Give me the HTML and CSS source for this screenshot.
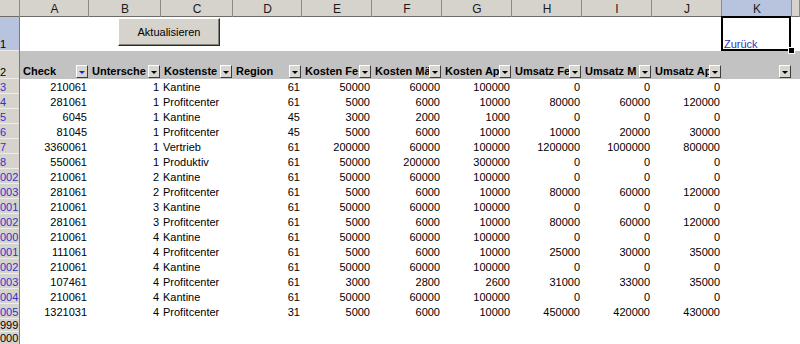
FILE: index.html
```html
<!DOCTYPE html>
<html lang="de">

<head>
    <meta charset="UTF-8">
    <title>Kostenübersicht</title>
    <link rel="stylesheet" href="styles.css">
</head>

<body>

    <div class="sheet">
        <table class="grid">
            <colgroup>
                <col class="w-rh">
                <col class="w69">
                <col class="w72">
                <col class="w72">
                <col class="w69">
                <col class="w70">
                <col class="w70">
                <col class="w70">
                <col class="w70">
                <col class="w70">
                <col class="w70">
                <col class="w70">
                <col class="w-rest">
            </colgroup>

            <!-- Column letters -->
            <thead>
                <tr class="col-head">
                    <th class="corner"></th>
                    <th>A</th>
                    <th>B</th>
                    <th>C</th>
                    <th>D</th>
                    <th>E</th>
                    <th>F</th>
                    <th>G</th>
                    <th>H</th>
                    <th>I</th>
                    <th>J</th>
                    <th class="active">K</th>
                    <th></th>
                </tr>
            </thead>

            <tbody>
                <tr class="row-top">
                    <th class="rh active">1</th>
                    <td></td><td></td><td></td><td></td><td></td><td></td>
                    <td></td><td></td><td></td><td></td>
                    <td class="selected"><a href="#">Zurück</a></td>
                    <td></td>
                </tr>

                <!-- Autofilter header -->
                <tr class="row-filter">
                    <th class="rh">2</th>
                    <td>Check<i class="dd on"></i></td>
                    <td>Untersche<i class="dd"></i></td>
                    <td>Kostenste<i class="dd"></i></td>
                    <td>Region<i class="dd"></i></td>
                    <td>Kosten Fe<i class="dd"></i></td>
                    <td>Kosten Mä<i class="dd"></i></td>
                    <td>Kosten Ap<i class="dd"></i></td>
                    <td>Umsatz Fe<i class="dd"></i></td>
                    <td>Umsatz M<i class="dd"></i></td>
                    <td>Umsatz Ap<i class="dd"></i></td>
                    <td><i class="dd"></i></td>
                    <td></td>
                </tr>

                <tr>
                    <th class="rh filtered">3</th>
                    <td class="n">210061</td><td class="n">1</td><td>Kantine</td><td class="n">61</td>
                    <td class="n">50000</td><td class="n">60000</td><td class="n">100000</td>
                    <td class="n">0</td><td class="n">0</td><td class="n">0</td><td></td><td></td>
                </tr>
                <tr>
                    <th class="rh filtered">4</th>
                    <td class="n">281061</td><td class="n">1</td><td>Profitcenter</td><td class="n">61</td>
                    <td class="n">5000</td><td class="n">6000</td><td class="n">10000</td>
                    <td class="n">80000</td><td class="n">60000</td><td class="n">120000</td><td></td><td></td>
                </tr>
                <tr>
                    <th class="rh filtered">5</th>
                    <td class="n">6045</td><td class="n">1</td><td>Kantine</td><td class="n">45</td>
                    <td class="n">3000</td><td class="n">2000</td><td class="n">1000</td>
                    <td class="n">0</td><td class="n">0</td><td class="n">0</td><td></td><td></td>
                </tr>
                <tr>
                    <th class="rh filtered">6</th>
                    <td class="n">81045</td><td class="n">1</td><td>Profitcenter</td><td class="n">45</td>
                    <td class="n">5000</td><td class="n">6000</td><td class="n">10000</td>
                    <td class="n">10000</td><td class="n">20000</td><td class="n">30000</td><td></td><td></td>
                </tr>
                <tr>
                    <th class="rh filtered">7</th>
                    <td class="n">3360061</td><td class="n">1</td><td>Vertrieb</td><td class="n">61</td>
                    <td class="n">200000</td><td class="n">60000</td><td class="n">100000</td>
                    <td class="n">1200000</td><td class="n">1000000</td><td class="n">800000</td><td></td><td></td>
                </tr>
                <tr>
                    <th class="rh filtered">8</th>
                    <td class="n">550061</td><td class="n">1</td><td>Produktiv</td><td class="n">61</td>
                    <td class="n">50000</td><td class="n">200000</td><td class="n">300000</td>
                    <td class="n">0</td><td class="n">0</td><td class="n">0</td><td></td><td></td>
                </tr>
                <tr>
                    <th class="rh filtered">002</th>
                    <td class="n">210061</td><td class="n">2</td><td>Kantine</td><td class="n">61</td>
                    <td class="n">50000</td><td class="n">60000</td><td class="n">100000</td>
                    <td class="n">0</td><td class="n">0</td><td class="n">0</td><td></td><td></td>
                </tr>
                <tr>
                    <th class="rh filtered">003</th>
                    <td class="n">281061</td><td class="n">2</td><td>Profitcenter</td><td class="n">61</td>
                    <td class="n">5000</td><td class="n">6000</td><td class="n">10000</td>
                    <td class="n">80000</td><td class="n">60000</td><td class="n">120000</td><td></td><td></td>
                </tr>
                <tr>
                    <th class="rh filtered">001</th>
                    <td class="n">210061</td><td class="n">3</td><td>Kantine</td><td class="n">61</td>
                    <td class="n">50000</td><td class="n">60000</td><td class="n">100000</td>
                    <td class="n">0</td><td class="n">0</td><td class="n">0</td><td></td><td></td>
                </tr>
                <tr>
                    <th class="rh filtered">002</th>
                    <td class="n">281061</td><td class="n">3</td><td>Profitcenter</td><td class="n">61</td>
                    <td class="n">5000</td><td class="n">6000</td><td class="n">10000</td>
                    <td class="n">80000</td><td class="n">60000</td><td class="n">120000</td><td></td><td></td>
                </tr>
                <tr>
                    <th class="rh filtered">000</th>
                    <td class="n">210061</td><td class="n">4</td><td>Kantine</td><td class="n">61</td>
                    <td class="n">50000</td><td class="n">60000</td><td class="n">100000</td>
                    <td class="n">0</td><td class="n">0</td><td class="n">0</td><td></td><td></td>
                </tr>
                <tr>
                    <th class="rh filtered">001</th>
                    <td class="n">111061</td><td class="n">4</td><td>Profitcenter</td><td class="n">61</td>
                    <td class="n">5000</td><td class="n">6000</td><td class="n">10000</td>
                    <td class="n">25000</td><td class="n">30000</td><td class="n">35000</td><td></td><td></td>
                </tr>
                <tr>
                    <th class="rh filtered">002</th>
                    <td class="n">210061</td><td class="n">4</td><td>Kantine</td><td class="n">61</td>
                    <td class="n">50000</td><td class="n">60000</td><td class="n">100000</td>
                    <td class="n">0</td><td class="n">0</td><td class="n">0</td><td></td><td></td>
                </tr>
                <tr>
                    <th class="rh filtered">003</th>
                    <td class="n">107461</td><td class="n">4</td><td>Profitcenter</td><td class="n">61</td>
                    <td class="n">3000</td><td class="n">2800</td><td class="n">2600</td>
                    <td class="n">31000</td><td class="n">33000</td><td class="n">35000</td><td></td><td></td>
                </tr>
                <tr>
                    <th class="rh filtered">004</th>
                    <td class="n">210061</td><td class="n">4</td><td>Kantine</td><td class="n">61</td>
                    <td class="n">50000</td><td class="n">60000</td><td class="n">100000</td>
                    <td class="n">0</td><td class="n">0</td><td class="n">0</td><td></td><td></td>
                </tr>
                <tr>
                    <th class="rh filtered">005</th>
                    <td class="n">1321031</td><td class="n">4</td><td>Profitcenter</td><td class="n">31</td>
                    <td class="n">5000</td><td class="n">6000</td><td class="n">10000</td>
                    <td class="n">450000</td><td class="n">420000</td><td class="n">430000</td><td></td><td></td>
                </tr>

                <tr class="row-empty">
                    <th class="rh">999</th>
                    <td></td><td></td><td></td><td></td><td></td><td></td>
                    <td></td><td></td><td></td><td></td><td></td><td></td>
                </tr>
                <tr class="row-empty">
                    <th class="rh">000</th>
                    <td></td><td></td><td></td><td></td><td></td><td></td>
                    <td></td><td></td><td></td><td></td><td></td><td></td>
                </tr>
            </tbody>
        </table>

        <!-- Floating sheet button -->
        <button class="btn-refresh" type="button">Aktualisieren</button>
    </div>

</body>

</html>
```

FILE: styles.css
```css
* {
    box-sizing: border-box;
}

html,
body {
    margin: 0;
    padding: 0;
    overflow: hidden;
    background-color: #ffffff;
}

body {
    font-family: 'Liberation Sans', Arial, sans-serif;
    font-size: 11px;
    color: #000000;
}

.sheet {
    position: relative;
    width: 800px;
    height: 344px;
    overflow: hidden;
}

/* Grid */
.grid {
    border-collapse: collapse;
    table-layout: fixed;
    width: 800px;
}

.grid th,
.grid td {
    padding: 0 2px;
    height: 15px;
    line-height: 14px;
    font-weight: normal;
    white-space: nowrap;
    overflow: hidden;
    vertical-align: bottom;
    text-align: left;
}

.grid td.n {
    text-align: right;
}

col.w-rh { width: 20px; }
col.w69 { width: 69px; }
col.w70 { width: 70px; }
col.w72 { width: 72px; }
col.w-rest { width: 8px; }

/* Column letters */
.col-head th {
    height: 17px;
    line-height: 16px;
    font-size: 12px;
    text-align: center;
    vertical-align: middle;
    background-color: #d6d3cc;
    color: #1a1a1a;
    box-shadow: inset -1px 0 #8d8a84, inset 0 -1px #6e6b66;
}

.col-head th.active {
    background-color: #b8c3dd;
}

/* Row numbers */
.grid th.rh {
    padding: 0;
    text-align: left;
    background-color: #d6d3cc;
    box-shadow: inset -1px 0 #7c7975, inset 0 -1px #eeece8;
}

.grid th.rh.active {
    background-color: #b8c3dd;
}

.grid th.rh.filtered {
    color: #3232c8;
}

/* Row 1 with the selected cell */
.row-top th,
.row-top td {
    height: 34px;
    line-height: 13px;
}

.row-top td.selected {
    position: relative;
    overflow: visible;
}

.row-top td.selected::after {
    content: "";
    position: absolute;
    left: -1px;
    top: -1px;
    right: 1px;
    bottom: 0;
    border: 2px solid #000000;
    z-index: 3;
}

.row-top td.selected::before {
    content: "";
    position: absolute;
    right: -3px;
    bottom: -3px;
    width: 5px;
    height: 5px;
    background-color: #000000;
    border: 1px solid #ffffff;
    z-index: 4;
}

.row-top a {
    color: #3434b8;
    text-decoration: underline;
}

/* Autofilter row */
.row-filter th,
.row-filter td {
    height: 28px;
    line-height: 13px;
    padding-bottom: 1px;
}

.row-filter td {
    position: relative;
    background-color: #c2c2c2;
    font-weight: bold;
    padding-left: 3px;
}

.dd {
    position: absolute;
    right: 1px;
    bottom: 1px;
    width: 12px;
    height: 13px;
    background-color: #d8d6d0;
    border: 1px solid;
    border-color: #ffffff #3c3c3c #3c3c3c #ffffff;
}

.dd::after {
    content: "";
    position: absolute;
    left: 2px;
    top: 5px;
    border-left: 3px solid transparent;
    border-right: 3px solid transparent;
    border-top: 3px solid #000000;
}

.dd.on::after {
    border-top-color: #1f1fd0;
}

/* Empty rows at the bottom */
.row-empty th,
.row-empty td {
    height: 13px;
    line-height: 13px;
}

/* Button placed on the sheet */
.btn-refresh {
    position: absolute;
    left: 118px;
    top: 18px;
    width: 102px;
    height: 28px;
    padding: 0;
    font-family: 'Liberation Sans', Arial, sans-serif;
    font-size: 11px;
    color: #000000;
    background-color: #d6d3cc;
    border: 1px solid;
    border-color: #ffffff #2a2a2a #2a2a2a #ffffff;
    box-shadow: inset -1px -1px #86837d;
    cursor: pointer;
}
```
